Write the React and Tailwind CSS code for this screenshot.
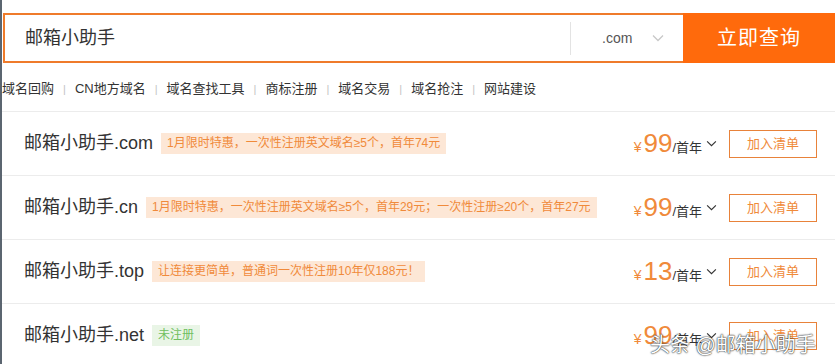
import { useState } from "react";

const links = ["域名回购", "CN地方域名", "域名查找工具", "商标注册", "域名交易", "域名抢注", "网站建设"];

const rows = [
    { name: "邮箱小助手.com", tag: "1月限时特惠，一次性注册英文域名≥5个，首年74元", price: "99" },
    { name: "邮箱小助手.cn", tag: "1月限时特惠，一次性注册英文域名≥5个，首年29元；一次性注册≥20个，首年27元", price: "99" },
    { name: "邮箱小助手.top", tag: "让连接更简单，普通词一次性注册10年仅188元！", price: "13" },
    { name: "邮箱小助手.net", tag: "未注册", price: "99", green: true },
];

function Chevron({ className }) {
    return (
        <svg viewBox="0 0 12 8" className={className} fill="none" stroke="currentColor" strokeWidth="1.3">
            <path d="M1 1.5l5 5 5-5" />
        </svg>
    );
}

export default function App() {
    const [query] = useState("邮箱小助手");

    return (
        <div className="relative w-[835px] h-[364px] overflow-hidden bg-white border-l-2 border-[#5b6570] font-['Liberation_Sans','Noto_Sans_CJK_SC',sans-serif]">
            {/* search bar */}
            <div className="flex h-[50px] mt-[13px] ml-px">
                <div className="flex flex-1 items-center border-2 border-r-0 border-[#ef7b2b]">
                    <div className="flex-1 pl-[20px] text-[18px] text-[#333]">{query}</div>
                    <div className="w-px h-[33px] bg-[#e3e3e3]"></div>
                    <div className="flex items-center w-[112px] pl-[31px] text-[14px] text-[#555]">
                        <span>.com</span>
                        <Chevron className="w-[12px] h-[8px] ml-[20px] text-[#c8c8c8]" />
                    </div>
                </div>
                <button className="w-[152px] bg-[#ff6a0c] text-white text-[20px] tracking-[1px]">立即查询</button>
            </div>

            {/* links */}
            <div className="flex items-center h-[22px] mt-[15px] text-[13px] text-[#333]">
                {links.map((l, i) => (
                    <span key={i} className="flex items-center">
                        {i > 0 && <span className="mx-[9px] text-[#c4c4c4] text-[11px]">|</span>}
                        {l}
                    </span>
                ))}
            </div>

            {/* results */}
            <div className="mt-[11px] border-t border-[#ececec]">
                {rows.map((r, i) => (
                    <div key={i} className="flex items-center h-[64px] pl-[22px] pr-[18px] border-b border-[#ececec]">
                        <span className="text-[18px] text-[#333]">{r.name}</span>
                        <span className={"ml-[8px] px-[6px] h-[21px] leading-[21px] text-[12px] " + (r.green ? "bg-[#e9f5e6] text-[#6fbf5f]" : "bg-[#fde7d6] text-[#f08a3a]")}>
                            {r.tag}
                        </span>
                        <div className="flex-1"></div>
                        <div className="flex items-baseline text-[#f08a3a]">
                            <span className="text-[14px] mr-[2px]">¥</span>
                            <span className="text-[26px] leading-none">{r.price}</span>
                            <span className="text-[13px] text-[#333]">/首年</span>
                        </div>
                        <Chevron className="w-[11px] h-[7px] ml-[4px] text-[#333]" />
                        <button className="ml-[12px] w-[88px] h-[28px] border border-[#e8823a] text-[#f08a3a] text-[13px]">加入清单</button>
                    </div>
                ))}
            </div>

            {/* watermark */}
            <div className="absolute left-[648px] top-[330px] text-[20px] text-white [text-shadow:0_0_2px_#333,0_0_1px_#000]">
                头条 @邮箱小助手
            </div>
        </div>
    );
}
